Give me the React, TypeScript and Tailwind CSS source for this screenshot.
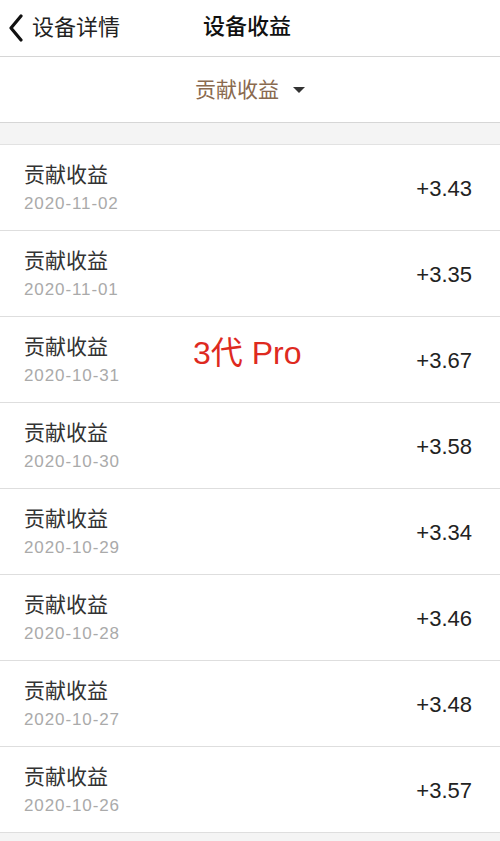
const rows = [
  { date: '2020-11-02', amount: '+3.43' },
  { date: '2020-11-01', amount: '+3.35' },
  { date: '2020-10-31', amount: '+3.67' },
  { date: '2020-10-30', amount: '+3.58' },
  { date: '2020-10-29', amount: '+3.34' },
  { date: '2020-10-28', amount: '+3.46' },
  { date: '2020-10-27', amount: '+3.48' },
  { date: '2020-10-26', amount: '+3.57' },
];

const font = { fontFamily: '"Liberation Sans", "Noto Sans CJK SC", sans-serif' };

export default function App() {
  return (
    <div className="relative w-[500px] h-[841px] overflow-hidden bg-[#f4f4f4]" style={font}>
      {/* header */}
      <div className="relative h-[57px] bg-white border-b border-[#d6d6d6] flex items-center">
        <div className="flex items-center pl-[8px]">
          <svg width="16" height="28" viewBox="0 0 16 28" className="mr-[8px]">
            <polyline points="13,2 3,14 13,26" fill="none" stroke="#111" strokeWidth="3.2" strokeLinecap="round" strokeLinejoin="round" />
          </svg>
          <span className="text-[22px] text-[#222] leading-none">设备详情</span>
        </div>
        <span className="absolute left-[203px] top-[16px] text-[22px] font-medium text-[#111] leading-none">
          设备收益
        </span>
      </div>

      {/* filter */}
      <div className="h-[66px] bg-white border-b border-[#d6d6d6] flex items-center justify-center pl-[0px]">
        <span className="text-[21px] text-[#8a6a4f] leading-none">贡献收益</span>
        <span className="ml-[14px] w-0 h-0 border-l-[6px] border-r-[6px] border-t-[6px] border-l-transparent border-r-transparent border-t-[#333]" />
      </div>

      <div className="h-[21px]" />

      {/* list */}
      <div className="border-t border-[#e2e2e2]">
        {rows.map((r) => (
          <div key={r.date} className="h-[86px] bg-white border-b border-[#dedede] flex items-center justify-between pl-[24px] pr-[28px]">
            <div className="flex flex-col">
              <span className="text-[21px] text-[#333] leading-none">贡献收益</span>
              <span className="mt-[10px] text-[17px] tracking-[0.9px] text-[#aaa] leading-none">{r.date}</span>
            </div>
            <span className="text-[22px] text-[#222] leading-none mt-[2px]">{r.amount}</span>
          </div>
        ))}
      </div>

      {/* overlay annotation */}
      <span className="absolute left-[193px] top-[337px] text-[32px] text-[#de2a1f] leading-none">3代 Pro</span>
    </div>
  );
}
